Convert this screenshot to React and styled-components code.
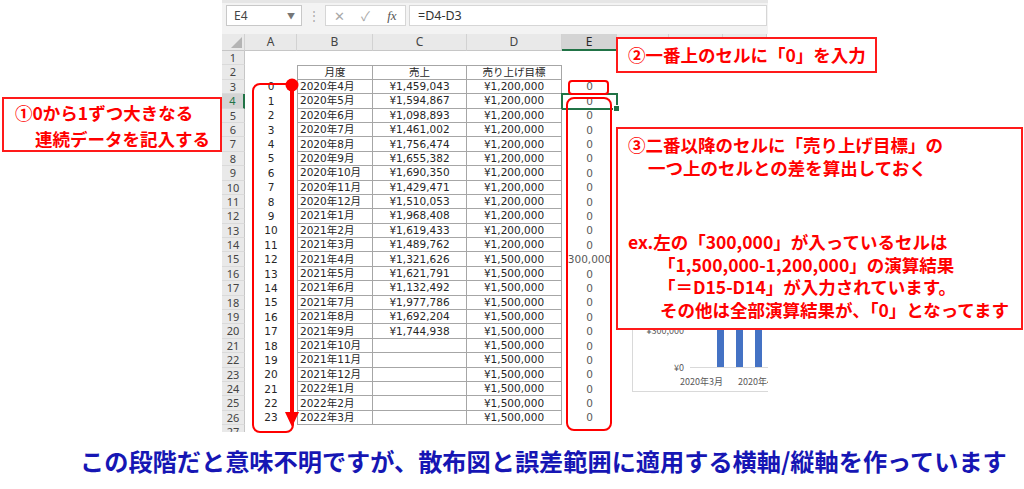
import React from 'react';
import styled, { createGlobalStyle, css } from 'styled-components';

const GlobalStyle = createGlobalStyle`
  html, body {
    margin: 0;
    padding: 0;
    background: #fff;
  }
  body {
    font-family: "Noto Sans", "Noto Sans CJK JP", sans-serif;
  }
`;

const Page = styled.div`
  position: relative;
  width: 1024px;
  height: 489px;
  overflow: hidden;
  background: #fff;
  display: flex;
  flex-direction: column;
`;

const Sheet = styled.div`
  position: relative;
  flex-shrink: 0;
  margin-left: 222px;
  width: 546px;
  height: 432px;
  overflow: hidden;
  background: #fff;
`;

const FormulaBar = styled.div`
  height: 34px;
  box-sizing: border-box;
  padding: 5px 1px 0 4px;
  display: flex;
  align-items: flex-start;
  background: #f3f3f3;
  border-top: 3px solid #e6e6e6;
`;

const NameBox = styled.div`
  width: 76px;
  height: 21px;
  box-sizing: border-box;
  margin-top: -3px;
  padding: 0 6px 0 7px;
  display: flex;
  align-items: center;
  justify-content: space-between;
  background: #fff;
  border: 1px solid #c8c8c8;
  font-size: 12px;
  color: #444;
`;

const Caret = styled.span`
  font-size: 8px;
  color: #777;
`;

const Dots = styled.div`
  width: 23px;
  height: 18px;
  text-align: center;
  font-size: 12px;
  color: #aaa;
  line-height: 16px;
`;

const FxGroup = styled.div`
  width: 81px;
  height: 21px;
  box-sizing: border-box;
  margin-top: -3px;
  display: grid;
  grid-template-columns: repeat(3, 1fr);
  align-items: center;
  justify-items: center;
  background: #fff;
  border: 1px solid #d6d6d6;
  color: #a8a8a8;
  font-size: 13px;
`;

const Fx = styled.span`
  font-family: "Liberation Serif", serif;
  font-style: italic;
  color: #555;
  font-size: 13px;
`;

const FormulaInput = styled.div`
  flex: 1;
  height: 21px;
  box-sizing: border-box;
  margin: -3px 0 0 3px;
  padding-left: 8px;
  background: #fff;
  border: 1px solid #d6d6d6;
  font-size: 12.5px;
  line-height: 19px;
  color: #333;
`;

const Grid = styled.div`
  display: grid;
  grid-template-columns: 23px 52px 76px 94px 95px 55px 52px 54px 44px;
  grid-template-rows: 17px;
  grid-auto-rows: 14.4px;
`;

const ColHead = styled.div`
  position: relative;
  box-sizing: border-box;
  background: #e9e9e9;
  border-right: 1px solid #d2d2d2;
  border-bottom: 1px solid #c6c6c6;
  font-size: 12px;
  line-height: 16px;
  text-align: center;
  color: #444;
  ${p => p.$active && css`
    background: #d4d4d4;
    color: #262626;
    border-bottom: 2px solid #217346;
  `}
`;

const Corner = styled.svg`
  position: absolute;
  right: 2px;
  bottom: 2px;
`;

const RowHead = styled.div`
  box-sizing: border-box;
  background: #e9e9e9;
  border-right: 1px solid #c6c6c6;
  border-bottom: 1px solid #dadada;
  font-size: 11px;
  line-height: 13.4px;
  text-align: center;
  color: #444;
  ${p => p.$active && css`
    background: #d4d4d4;
    color: #217346;
    border-right: 2px solid #217346;
  `}
`;

const Cell = styled.div`
  position: relative;
  box-sizing: border-box;
  display: flex;
  align-items: center;
  justify-content: ${p => p.$align || 'center'};
  padding: 0 2px;
  white-space: nowrap;
  font-family: "DejaVu Sans", "Noto Sans CJK JP", sans-serif;
  font-size: 10.5px;
  line-height: 13px;
  color: ${p => (p.$muted ? '#595959' : '#262626')};
  ${p => p.$boxed && css`
    border-right: 1px solid #a6a6a6;
    border-bottom: 1px solid #a6a6a6;
  `}
  ${p => p.$first && css`border-left: 1px solid #a6a6a6;`}
  ${p => p.$topEdge && css`border-top: 1px solid #a6a6a6;`}
  ${p => p.$selected && css`
    outline: 2px solid #217346;
    outline-offset: -1px;
    &::after {
      content: '';
      position: absolute;
      right: -3px;
      bottom: -3px;
      width: 5px;
      height: 5px;
      background: #217346;
      border: 1px solid #fff;
    }
  `}
`;

const Chart = styled.div`
  position: absolute;
  left: 410px;
  top: 250px;
  width: 200px;
  height: 142px;
  box-sizing: border-box;
  background: #fff;
  border: 1px solid #d9d9d9;
`;

const Callout = styled.div`
  position: absolute;
  left: ${p => p.$x}px;
  top: ${p => p.$y}px;
  width: ${p => p.$w}px;
  height: ${p => p.$h}px;
  box-sizing: border-box;
  padding: ${p => p.$pad || '0 0 0 10px'};
  background: #fff;
  border: 2px solid #ff1a1a;
  color: #ff0000;
  font-family: "Noto Sans CJK JP", sans-serif;
  font-weight: 700;
  font-size: 17.5px;
  line-height: ${p => p.$lh || 22.5}px;
  white-space: nowrap;
`;

const Line = styled.div`
  padding-left: ${p => p.$indent || 0}px;
  margin-top: ${p => p.$gap || 0}px;
`;

const Ring = styled.div`
  position: absolute;
  left: ${p => p.$x}px;
  top: ${p => p.$y}px;
  width: ${p => p.$w}px;
  height: ${p => p.$h}px;
  box-sizing: border-box;
  border: 2px solid #ff0000;
  border-radius: ${p => p.$r}px;
`;

const Arrow = styled.svg`
  position: absolute;
  left: 282px;
  top: 77px;
`;

const Caption = styled.div`
  height: 57px;
  padding-left: 80px;
  font-family: "Noto Sans CJK JP", sans-serif;
  font-weight: 700;
  font-size: 24.2px;
  line-height: 57px;
  color: #1616b4;
  white-space: nowrap;
`;

const sales = [
  '¥1,459,043', '¥1,594,867', '¥1,098,893', '¥1,461,002', '¥1,756,474', '¥1,655,382',
  '¥1,690,350', '¥1,429,471', '¥1,510,053', '¥1,968,408', '¥1,619,433', '¥1,489,762',
  '¥1,321,626', '¥1,621,791', '¥1,132,492', '¥1,977,786', '¥1,692,204', '¥1,744,938',
];

const rows = Array.from({ length: 24 }, (_, i) => {
  const m = ((i + 3) % 12) + 1;
  const y = 2020 + Math.floor((i + 3) / 12);
  return {
    n: i,
    month: `${y}年${m}月`,
    sale: sales[i] || '',
    goal: i < 12 ? '¥1,200,000' : '¥1,500,000',
    diff: i === 12 ? '300,000' : '0',
  };
});

const cols = ['', 'A', 'B', 'C', 'D', 'E', '', '', ''];

const Empty = ({ count }) =>
  Array.from({ length: count }, (_, i) => <Cell key={`e${i}`} />);

export default function App() {
  return (
    <>
      <GlobalStyle />
      <Page>
        <Sheet>
          <FormulaBar>
            <NameBox>
              E4<Caret>▼</Caret>
            </NameBox>
            <Dots>⋮</Dots>
            <FxGroup>
              <span>✕</span>
              <span>✓</span>
              <Fx>fx</Fx>
            </FxGroup>
            <FormulaInput>=D4-D3</FormulaInput>
          </FormulaBar>

          <Grid>
            {cols.map((c, i) => (
              <ColHead key={`h${i}`} $active={c === 'E'}>
                {i === 0 ? (
                  <Corner width="11" height="11" viewBox="0 0 11 11">
                    <polygon points="11,0 11,11 0,11" fill="#b4b4b4" />
                  </Corner>
                ) : c}
              </ColHead>
            ))}

            <RowHead>1</RowHead>
            <Empty count={8} />

            <RowHead>2</RowHead>
            <Cell />
            <Cell $boxed $first $topEdge>月度</Cell>
            <Cell $boxed $topEdge>売上</Cell>
            <Cell $boxed $topEdge>売り上げ目標</Cell>
            <Empty count={4} />

            {rows.map((r, i) => (
              <React.Fragment key={r.month}>
                <RowHead $active={i === 1}>{i + 3}</RowHead>
                <Cell>{r.n}</Cell>
                <Cell $boxed $first $align="flex-start">{r.month}</Cell>
                <Cell $boxed>{r.sale}</Cell>
                <Cell $boxed>{r.goal}</Cell>
                <Cell $muted $selected={i === 1}>{r.diff}</Cell>
                <Empty count={3} />
              </React.Fragment>
            ))}

            <RowHead>27</RowHead>
            <Empty count={8} />
          </Grid>

          <Chart>
            <svg width="200" height="142" viewBox="0 0 200 142">
              <text x="51" y="83" textAnchor="end" fontSize="9" fill="#595959"
                fontFamily="Noto Sans CJK JP, sans-serif">¥300,000</text>
              <line x1="57" y1="116.5" x2="200" y2="116.5" stroke="#d9d9d9" />
              <rect x="84" y="0" width="7" height="116" fill="#4472c4" />
              <rect x="103" y="0" width="7" height="116" fill="#4472c4" />
              <rect x="122" y="0" width="7" height="116" fill="#4472c4" />
              <text x="51" y="120" textAnchor="end" fontSize="9" fill="#595959"
                fontFamily="Noto Sans CJK JP, sans-serif">¥0</text>
              <text x="47" y="134" fontSize="9" fill="#595959"
                fontFamily="Noto Sans CJK JP, sans-serif">2020年3月</text>
              <text x="105" y="134" fontSize="9" fill="#595959"
                fontFamily="Noto Sans CJK JP, sans-serif">2020年4月</text>
            </svg>
          </Chart>
        </Sheet>

        <Caption>この段階だと意味不明ですが、散布図と誤差範囲に適用する横軸/縦軸を作っています</Caption>

        <Ring $x={252} $y={83} $w={42} $h={350} $r={8} />
        <Ring $x={568} $y={80} $w={41} $h={15} $r={4} />
        <Ring $x={566} $y={97} $w={46} $h={334} $r={8} />

        <Arrow width="20" height="352" viewBox="0 0 20 352">
          <circle cx="10" cy="8" r="6.5" fill="#ff0000" />
          <line x1="10" y1="8" x2="10" y2="336" stroke="#ff0000" strokeWidth="4" />
          <polygon points="3,335 17,335 10,350" fill="#ff0000" />
        </Arrow>

        <Callout $x={2} $y={97} $w={220} $h={55} $lh={26} $pad="1px 0 0 11px">
          <Line>①0から1ずつ大きなる</Line>
          <Line $indent={20}>連続データを記入する</Line>
        </Callout>

        <Callout $x={616} $y={37} $w={261} $h={36} $lh={32}>
          <Line>②一番上のセルに「0」を入力</Line>
        </Callout>

        <Callout $x={616} $y={127} $w={407} $h={203} $pad="5px 0 0 10px">
          <Line>③二番以降のセルに「売り上げ目標」の</Line>
          <Line $indent={20}>一つ上のセルとの差を算出しておく</Line>
          <Line $gap={52}>ex.左の「300,000」が入っているセルは</Line>
          <Line $indent={30}>「1,500,000-1,200,000」の演算結果</Line>
          <Line $indent={30}>「＝D15-D14」が入力されています。</Line>
          <Line $indent={32}>その他は全部演算結果が、「0」となってます</Line>
        </Callout>
      </Page>
    </>
  );
}
